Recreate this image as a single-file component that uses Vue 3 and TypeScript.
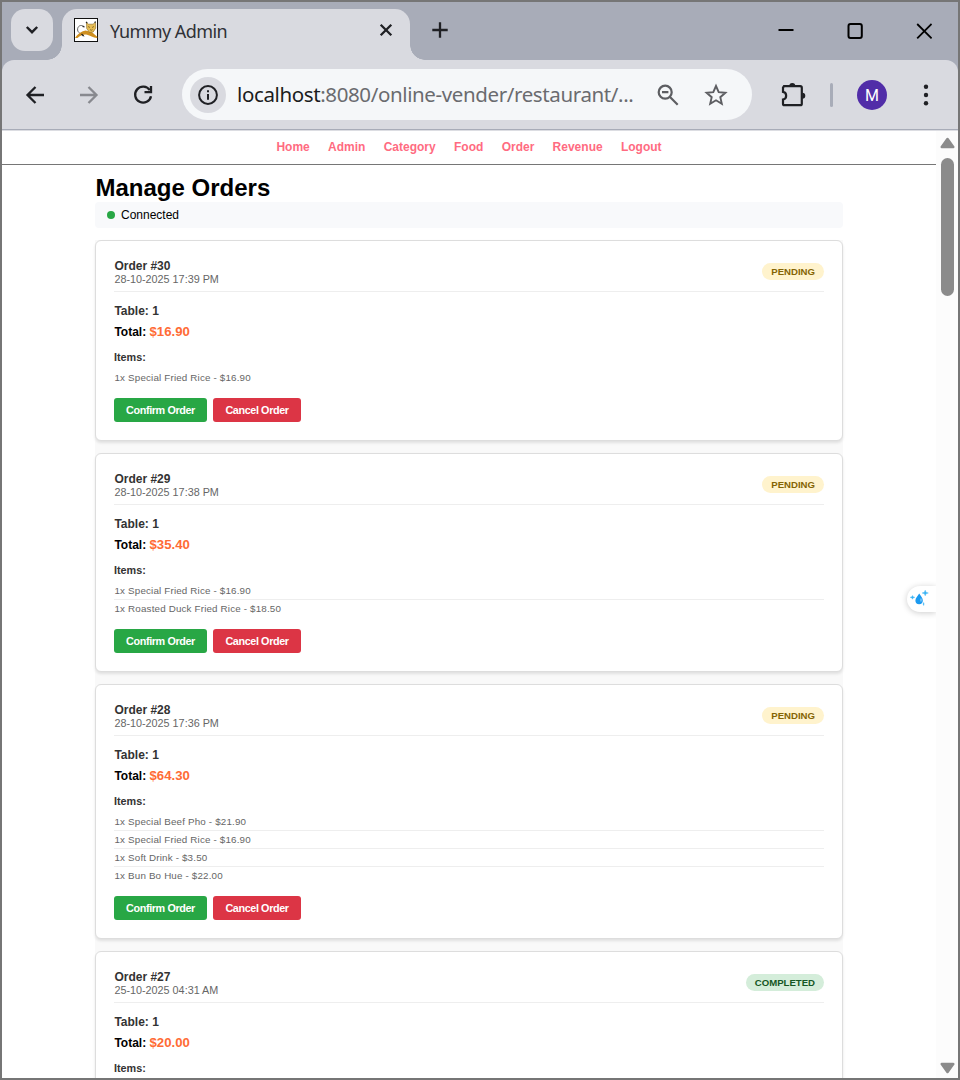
<script setup lang="ts">
interface Order {
  id: number
  time: string
  total: string
  status: 'pending' | 'completed'
  items: string[]
}

const links: string[] = ['Home', 'Admin', 'Category', 'Food', 'Order', 'Revenue', 'Logout']

const orders: Order[] = [
  { id: 30, time: '28-10-2025 17:39 PM', total: '$16.90', status: 'pending', items: ['1x Special Fried Rice - $16.90'] },
  {
    id: 29,
    time: '28-10-2025 17:38 PM',
    total: '$35.40',
    status: 'pending',
    items: ['1x Special Fried Rice - $16.90', '1x Roasted Duck Fried Rice - $18.50'],
  },
  {
    id: 28,
    time: '28-10-2025 17:36 PM',
    total: '$64.30',
    status: 'pending',
    items: ['1x Special Beef Pho - $21.90', '1x Special Fried Rice - $16.90', '1x Soft Drink - $3.50', '1x Bun Bo Hue - $22.00'],
  },
  { id: 27, time: '25-10-2025 04:31 AM', total: '$20.00', status: 'completed', items: [] },
]
</script>

<template>
  <div class="window">
    <div class="tabstrip">
      <button class="tab-search" aria-label="Search tabs">
        <svg width="14" height="10" viewBox="0 0 14 10"><path d="M1.8 2 7 7.2 12.2 2" fill="none" stroke="#1f2024" stroke-width="2.4" /></svg>
      </button>
      <div class="tab">
        <svg class="favicon" width="24" height="24" viewBox="0 0 24 24">
          <rect x=".5" y=".5" width="23" height="23" fill="#fff" stroke="#111" />
          <path d="M10 8.500C6.500 6 3.200 8.500 3.600 12c.2 1.500 1 2.500 2 3M8 15l2 3.500" fill="none" stroke="#555" stroke-width=".9" />
          <path d="M1 20C3 16.500 7 13.500 11.500 12.500l6 1.500c2 1 3.500 3 6 5l-.5 1c-4 0-7-2.500-10-3.200C9.500 16 6.500 17.500 3.500 20z" fill="#cf8f1e" />
          <path d="M12.500 4.500l2 1.700h4.500l2.500-2 .2 6-2.500 3.800-3.700.5-2.800-4z" fill="#e6bd55" stroke="#8b6b25" stroke-width=".6" />
          <path d="M14 8.500l2 1M20 8.500l-2 1M16 11.500l1.200.8 1.300-.8" fill="none" stroke="#6f5316" stroke-width=".7" />
          <path d="M12 3.800l1.200 1.200M21.500 3.500l-.8 1.300M8.500 8.500l2 .3M7.500 16l2 2" stroke="#222" stroke-width="1.200" />
        </svg>
        <span class="tab-title">Yummy Admin</span>
        <svg class="tab-close" width="14" height="14" viewBox="0 0 14 14"><path d="M1.700 1.700l10.600 10.600M12.300 1.700 1.700 12.300" stroke="#1f2024" stroke-width="2.300" /></svg>
      </div>
      <svg class="new-tab" width="16" height="16" viewBox="0 0 16 16"><path d="M8 .3v15.400M.3 8h15.400" stroke="#1f2024" stroke-width="2.300" /></svg>
      <div class="controls">
        <svg width="16" height="18" viewBox="0 0 16 18"><path d="M.5 8h15" stroke="#000" stroke-width="2" /></svg>
        <svg width="16" height="18" viewBox="0 0 16 18"><rect x="1.500" y="2" width="13.300" height="14" rx="2" fill="none" stroke="#000" stroke-width="2" /></svg>
        <svg width="16" height="18" viewBox="0 0 16 18"><path d="M1.200 2 15.600 16.400M15.600 2 1.200 16.400" stroke="#000" stroke-width="1.800" /></svg>
      </div>
    </div>

    <div class="toolbar">
      <svg class="nav-icon" width="22" height="22" viewBox="0 0 22 22"><path d="M20 11H4M11.500 3 3.500 11l8 8" fill="none" stroke="#1f2024" stroke-width="2.300" /></svg>
      <svg class="nav-icon" width="22" height="22" viewBox="0 0 22 22"><path d="M2 11h16M10.500 3l8 8-8 8" fill="none" stroke="#88898f" stroke-width="2.300" /></svg>
      <svg class="nav-icon" width="22" height="22" viewBox="0 0 22 22">
        <path d="M17.800 6.200A8 8 0 1 0 19 12.200" fill="none" stroke="#1f2024" stroke-width="2.300" />
        <path d="M12.500 8.200h6.500V2" fill="none" stroke="#1f2024" stroke-width="2.300" />
      </svg>
      <div class="address">
        <span class="info">
          <svg width="22" height="22" viewBox="0 0 22 22">
            <circle cx="11" cy="11" r="8.900" fill="none" stroke="#1f2024" stroke-width="2" />
            <path d="M11 10v5.800M11 6.200v2.100" stroke="#1f2024" stroke-width="2" />
          </svg>
        </span>
        <span class="url"><b>localhost</b>:8080/online-vender/restaurant/...</span>
        <svg class="magnify" width="22" height="22" viewBox="0 0 22 22">
          <circle cx="8.200" cy="8.200" r="6.500" fill="none" stroke="#5d5e62" stroke-width="2.200" />
          <path d="M5 8.200h6.400M13 13l7.700 7.700" stroke="#5d5e62" stroke-width="2.200" />
        </svg>
        <svg class="star" width="24" height="24" viewBox="0 0 24 24">
          <path d="M12 3l2.700 6.200 6.700.6-5.100 4.400 1.500 6.600L12 17.300l-5.800 3.500 1.500-6.600-5.100-4.400 6.700-.6z" fill="none" stroke="#5d5e62" stroke-width="1.900" />
        </svg>
      </div>
      <svg class="puzzle" width="26" height="26" viewBox="0 0 26 26">
        <path d="M4 4.200h16.300a1.500 1.500 0 0 1 1.500 1.500v16a1.500 1.500 0 0 1-1.500 1.500H4.500a1.500 1.500 0 0 1-1.500-1.500v-4.200c4.200-.6 4.200-7 0-7.600V5.700z" fill="none" stroke="#1f2024" stroke-width="2.200" />
        <path d="M9.300 4a3 3 0 0 1 6 0zM22.300 10.800a3 3 0 0 1 0 6z" fill="#1f2024" />
      </svg>
      <span class="separator"></span>
      <span class="avatar">M</span>
      <svg class="kebab" width="6" height="22" viewBox="0 0 6 22"><circle cx="3" cy="2.700" r="2.200" /><circle cx="3" cy="11" r="2.200" /><circle cx="3" cy="19.300" r="2.200" /></svg>
    </div>

    <div class="viewport">
      <div class="page">
        <nav class="menu">
          <a v-for="link in links" :key="link">{{ link }}</a>
        </nav>
        <main class="content">
          <h1>Manage Orders</h1>
          <div class="connection"><i></i><span>Connected</span></div>
          <div class="orders">
            <article v-for="order in orders" :key="order.id" class="card">
              <header>
                <div>
                  <h2>Order #{{ order.id }}</h2>
                  <time>{{ order.time }}</time>
                </div>
                <span class="badge" :class="order.status">{{ order.status }}</span>
              </header>
              <p class="table">Table: 1</p>
              <p class="total">Total: <em>{{ order.total }}</em></p>
              <h3>Items:</h3>
              <ul>
                <li v-for="item in order.items" :key="item">{{ item }}</li>
              </ul>
              <div v-if="order.status === 'pending'" class="actions">
                <button class="confirm">Confirm Order</button>
                <button class="cancel">Cancel Order</button>
              </div>
            </article>
          </div>
        </main>
        <div class="widget">
          <svg width="20" height="18" viewBox="0 0 20 18">
            <path d="M9.200 3.500c2 3 3.600 4.700 3.600 7a3.700 3.700 0 0 1-7.400 0c0-2.300 2-4 3.800-7z" fill="#1b9af0" />
            <path d="M15.200 .2l.8 2 2.300.8-2.300.8-.8 2-.8-2-2.300-.8 2.300-.8zM2.500 5.500l.6 1.300 1.700.5-1.700.6-.6 1.300-.6-1.300L.2 7.300l1.700-.5zM13.600 12.500l.5 1.500-.5 1.500-.5-1.500z" fill="#39b4f4" stroke="#39b4f4" stroke-width=".4" />
            <path d="M11 8.500v3" stroke="#a8dcff" stroke-width="1" />
          </svg>
        </div>
      </div>
      <div class="scrollbar">
        <svg width="16" height="12" viewBox="0 0 16 12"><path d="M8.500 2 14.200 10H2.800z" fill="#8b8b8b" stroke="#8b8b8b" stroke-width="2.600" stroke-linejoin="round" /></svg>
        <span class="thumb"></span>
        <svg class="down" width="16" height="12" viewBox="0 0 16 12"><path d="M8.500 10 14.200 2H2.800z" fill="#8b8b8b" stroke="#8b8b8b" stroke-width="2.600" stroke-linejoin="round" /></svg>
      </div>
    </div>
  </div>
</template>

<style>
body {
  margin: 0;
  overflow: hidden;
}
</style>

<style scoped>
* {
  box-sizing: border-box;
}
svg {
  display: block;
  flex: none;
}
button {
  border: 0;
  font: inherit;
}
.window {
  width: 960px;
  height: 1080px;
  border: 2px solid #767676;
  display: flex;
  flex-direction: column;
  background: #a8acb8;
  overflow: hidden;
  font-family: "Liberation Sans", Arial, sans-serif;
}
.tabstrip {
  height: 58px;
  flex: none;
  display: flex;
  align-items: flex-start;
  padding: 7px 0 0 9px;
}
.tab-search {
  width: 42px;
  height: 42px;
  border-radius: 14px;
  background: #d9dae0;
  display: flex;
  align-items: center;
  justify-content: center;
  padding: 0;
}
.tab {
  position: relative;
  width: 348px;
  height: 51px;
  margin-left: 9px;
  border-radius: 15px 15px 0 0;
  background: #d9dae0;
  display: flex;
  align-items: flex-start;
  padding: 9px 17px 0 12px;
}
.tab::before,
.tab::after {
  content: "";
  position: absolute;
  bottom: 0;
  width: 15px;
  height: 15px;
}
.tab::before {
  left: -15px;
  background: radial-gradient(circle at 0 0, transparent 14.500px, #d9dae0 15px);
}
.tab::after {
  right: -15px;
  background: radial-gradient(circle at 100% 0, transparent 14.500px, #d9dae0 15px);
}
.tab-title {
  flex: 1;
  margin: 0 0 0 12px;
  font: 18px/26px "Noto Sans", sans-serif;
  letter-spacing: -0.580px;
  color: #303136;
  white-space: nowrap;
}
.tab-close {
  margin-top: 5px;
}
.new-tab {
  margin: 13px 0 0 22px;
}
.controls {
  margin: 13px 26px 0 auto;
  display: flex;
  gap: 53px;
}
.toolbar {
  height: 69px;
  flex: none;
  display: flex;
  align-items: center;
  padding-left: 22px;
  background: #d9dae0;
  border-radius: 12px 12px 0 0;
}
.nav-icon {
  margin-right: 32px;
}
.address {
  width: 570px;
  height: 51px;
  margin-left: -4px;
  padding-left: 8px;
  border-radius: 26px;
  background: #f5f7f9;
  display: flex;
  align-items: center;
}
.info {
  width: 36px;
  height: 36px;
  flex: none;
  border-radius: 50%;
  background: #d9dae0;
  display: flex;
  align-items: center;
  justify-content: center;
}
.url {
  width: 408px;
  margin: 0 0 2px 11px;
  font: 20.500px/30px "Noto Sans", sans-serif;
  letter-spacing: -0.380px;
  color: #6a6b6f;
  white-space: nowrap;
}
.url b {
  font-weight: 400;
  color: #1b1c20;
}
.magnify {
  margin-left: 12px;
}
.star {
  margin-left: 25px;
}
.puzzle {
  margin-left: 28px;
}
.separator {
  width: 3px;
  height: 24px;
  margin-left: 24px;
  border-radius: 2px;
  background: #a8acb8;
}
.avatar {
  width: 30px;
  height: 30px;
  margin-left: 24px;
  border-radius: 50%;
  background: #512da8;
  color: #fff;
  font: 16px/31px Roboto, sans-serif;
  text-align: center;
}
.kebab {
  margin-left: 36px;
  fill: #1f2024;
}
.viewport {
  flex: 1;
  min-height: 0;
  border-top: 1px solid #a8acb8;
  box-shadow: inset 0 1px #dcdde2;
  padding-top: 1px;
  display: flex;
  background: #fff;
}
.page {
  position: relative;
  width: 934px;
  height: 947px;
  overflow: hidden;
}
.menu {
  height: 34px;
  border-bottom: 1px solid #767676;
  display: flex;
  justify-content: center;
  gap: 18.300px;
  font-size: 12px;
  font-weight: 700;
  line-height: 32px;
  color: #ff6b81;
}
.content {
  width: 748px;
  margin: 0 auto;
}
h1 {
  margin: 9px 0 0 0.500px;
  font-size: 24px;
  line-height: 28px;
  color: #000;
}
.connection {
  height: 26px;
  border-radius: 4px;
  background: #f8f9fb;
  display: flex;
  align-items: center;
  gap: 6px;
  padding-left: 12px;
  font-size: 12px;
  color: #000;
}
.connection i {
  width: 8px;
  height: 8px;
  border-radius: 50%;
  background: #28a745;
}
.orders {
  margin-top: 12px;
  display: flex;
  flex-direction: column;
  gap: 12px;
  background: #f9f9f9;
}
.card {
  padding: 18px;
  border: 1px solid #ddd;
  border-radius: 6px;
  background: #fff;
  box-shadow: 0 2px 3px rgba(0, 0, 0, 0.1);
}
header {
  height: 33px;
  border-bottom: 1px solid #eee;
  display: flex;
  justify-content: space-between;
  align-items: flex-start;
}
h2 {
  margin: 0;
  padding-left: 0.400px;
  font-size: 12px;
  line-height: 14px;
  color: #333;
}
time {
  display: block;
  padding-left: 0.400px;
  font-size: 10.800px;
  line-height: 13px;
  color: #666;
}
.badge {
  height: 17px;
  margin-top: 4px;
  padding: 0 9px;
  border-radius: 9px;
  font-size: 9.600px;
  font-weight: 700;
  line-height: 17px;
  text-transform: uppercase;
}
.pending {
  background: #fff3cd;
  color: #856404;
}
.completed {
  background: #d4edda;
  color: #155724;
}
.card p {
  margin: 0;
  padding-left: 0.400px;
  font-size: 12px;
  font-weight: 700;
}
.card .table {
  margin-top: 12px;
  line-height: 14px;
  color: #333;
}
.card .total {
  margin-top: 6px;
  line-height: 16px;
  color: #000;
}
.total em {
  font-style: normal;
  font-size: 13.200px;
  color: #ff6b35;
}
h3 {
  margin: 11px 0 0;
  font-size: 10.800px;
  line-height: 12px;
  color: #333;
}
ul {
  margin: 6px 0 0;
  padding: 0;
  list-style: none;
}
li {
  height: 18px;
  padding-left: 0.500px;
  border-bottom: 1px solid #eee;
  font-size: 9.800px;
  line-height: 18px;
  letter-spacing: 0.170px;
  color: #666;
}
li:last-child {
  border-bottom: 0;
}
.actions {
  display: flex;
  gap: 6px;
  margin-top: 11px;
}
.actions button {
  height: 24px;
  padding: 0;
  border-radius: 3px;
  color: #fff;
  font-size: 10.800px;
  font-weight: 700;
  letter-spacing: -0.380px;
  line-height: 24px;
  white-space: nowrap;
}
.confirm {
  width: 93px;
  background: #28a745;
}
.cancel {
  width: 88px;
  background: #dc3545;
}
.widget {
  position: absolute;
  top: 455px;
  right: 0;
  width: 29px;
  height: 26px;
  padding: 4px 0 0 3px;
  border-radius: 13px 0 0 13px;
  background: #fff;
  box-shadow: 0 1px 6px rgba(0, 0, 0, 0.2);
}
.scrollbar {
  width: 22px;
  height: 947px;
  background: #fcfcfc;
  display: flex;
  flex-direction: column;
  align-items: center;
  padding: 6px 0 4px;
}
.thumb {
  width: 13px;
  height: 138px;
  margin-top: 9px;
  border-radius: 7px;
  background: #8b8b8b;
}
.down {
  margin-top: auto;
}
</style>
